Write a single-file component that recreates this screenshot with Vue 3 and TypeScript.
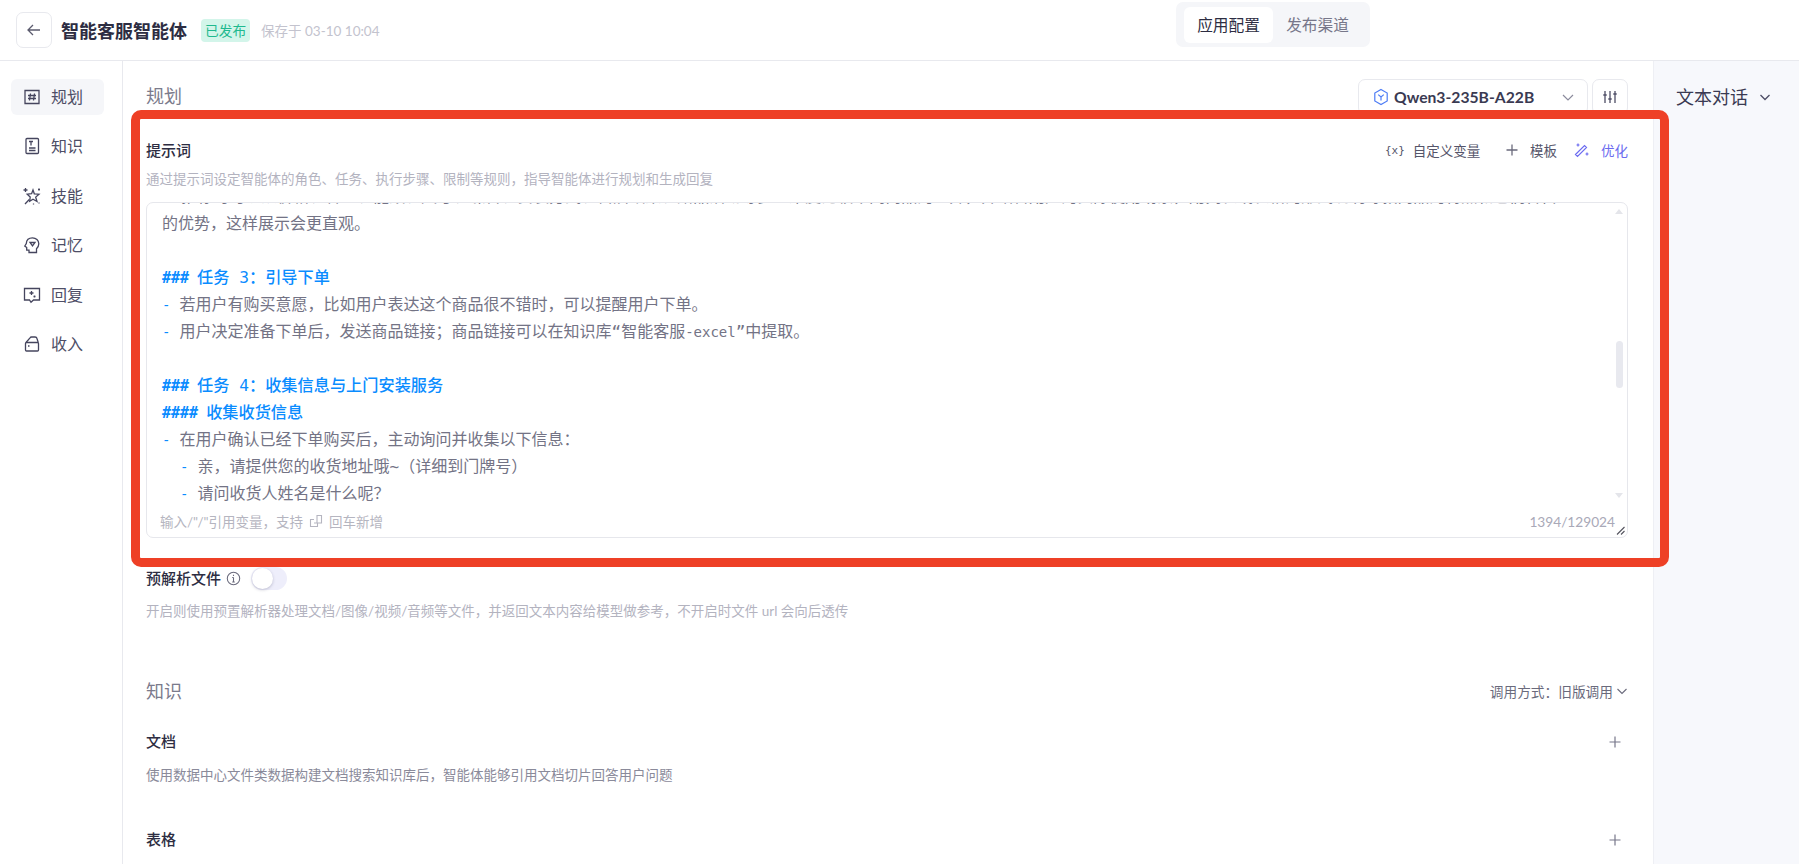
<template>
  <div class="page">
    <header class="topbar">
      <button class="back-btn">
        <svg width="18" height="18" viewBox="0 0 18 18" fill="none" stroke="#5b5b6e" stroke-width="1.3">
          <path d="M15 9H3.2M8 4 3 9l5 5" />
        </svg>
      </button>
      <h1 class="app-name">智能客服智能体</h1>
      <span class="badge">已发布</span>
      <span class="saved">保存于 03-10 10:04</span>
      <div class="tabs">
        <span class="tab active">应用配置</span>
        <span class="tab">发布渠道</span>
      </div>
    </header>

    <div class="body">
      <nav class="sidebar">
        <a v-for="item in navItems" :key="item.label" class="nav-item" :class="{ active: item.label === '规划' }">
          <svg width="18" height="18" viewBox="0 0 18 18" fill="none" stroke="#45455e" stroke-width="1.3">
            <path v-for="d in item.paths" :key="d" :d="d" />
          </svg>
          <span class="nav-label">{{ item.label }}</span>
        </a>
      </nav>

      <main class="main">
        <div class="title-row">
          <h2 class="section-title plan-title">规划</h2>
          <div class="model-select">
            <svg width="16" height="18" viewBox="0 0 16 18" fill="none" stroke="#4d7cf5" stroke-width="1.2">
              <path d="M8 1.5 14.2 5v8L8 16.5 1.8 13V5z" />
              <path d="M5.2 6.6 8 9l2.8-2.4M8 9v3.4" />
            </svg>
            <span class="model-name">Qwen3-235B-A22B</span>
            <svg class="chev" width="14" height="14" viewBox="0 0 14 14" fill="none" stroke="#8b8b9c" stroke-width="1.2">
              <path d="m2 5 5 5 5-5" />
            </svg>
          </div>
          <button class="tune-btn">
            <svg width="16" height="16" viewBox="0 0 16 16" fill="none" stroke="#4e4e66" stroke-width="1.3">
              <path d="M3 2v12M8 2v12M13 2v12M1.3 6h3.4M6.3 10h3.4M11.3 5h3.4" />
            </svg>
          </button>
        </div>

        <div class="prompt-head">
          <span class="label">提示词</span>
          <div class="actions">
            <span class="action"><i class="var-icon">{x}</i>自定义变量</span>
            <span class="action plus-action">
              <svg width="14" height="14" viewBox="0 0 14 14" fill="none" stroke="#6a6a7c" stroke-width="1.3">
                <path d="M7 1.5v11M1.5 7h11" />
              </svg>
              模板
            </span>
            <span class="action optimize">
              <svg width="16" height="16" viewBox="0 0 16 16" fill="none" stroke="#6b6bf0" stroke-width="1.2">
                <path d="m1.5 12.5 9-9 2 2-9 9zM2.5 3h3M4 1.500v3M11.5 12h3M13 10.500v3" />
              </svg>
              优化
            </span>
          </div>
        </div>
        <p class="hint">通过提示词设定智能体的角色、任务、执行步骤、限制等规则，指导智能体进行规划和生成回复</p>

        <div class="editor">
          <div class="editor-scroll">
            <div class="editor-text">
              <div v-for="(row, i) in promptRows" :key="i" class="row" :class="{ head: row.head }">
                <template v-if="row.head"><b class="mark">{{ row.mark }}</b>{{ row.text }}</template>
                <template v-else-if="row.mark"><span class="dash" :class="{ sub: row.sub }">-</span>{{ row.text }}<code v-if="row.code">{{ row.code }}</code>{{ row.tail }}</template>
                <template v-else>{{ row.text }}</template>
              </div>
            </div>
            <div class="scrollbar">
              <i class="arrow up" />
              <i class="thumb" />
              <i class="arrow down" />
            </div>
          </div>
          <div class="editor-foot">
            <span class="foot-hint">
              输入/"/"引用变量，支持
              <svg width="14" height="14" viewBox="0 0 14 14" fill="none" stroke="#b5b5c0" stroke-width="1.1">
                <path d="M5 5.500H1.500v7h7V9M5 9h7.500V1.500H8V9" />
              </svg>
              回车新增
            </span>
            <span class="counter">1394/129024</span>
          </div>
          <svg class="resize" width="9" height="9" viewBox="0 0 9 9" fill="none" stroke="#55555f" stroke-width="1.1">
            <path d="M1 8.500 8.500 1M5 8.500 8.500 5" />
          </svg>
        </div>

        <div class="parse-row">
          <span class="label">预解析文件</span>
          <svg width="15" height="15" viewBox="0 0 14 14" fill="none" stroke="#6a6a7c" stroke-width="1">
            <circle cx="7" cy="7" r="5.800" />
            <path d="M7 6v4M5.800 10.200h2.400M5.800 6H7M7 3.600v1" />
          </svg>
          <span class="toggle"><i class="knob" /></span>
        </div>
        <p class="hint parse-hint">开启则使用预置解析器处理文档/图像/视频/音频等文件，并返回文本内容给模型做参考，不开启时文件 url 会向后透传</p>

        <div class="knowledge-head">
          <h2 class="section-title know-title">知识</h2>
          <span class="call-mode">
            调用方式：旧版调用
            <svg width="12" height="12" viewBox="0 0 12 12" fill="none" stroke="#6a6a7c" stroke-width="1.1">
              <path d="m1.500 4 4.500 4.500L10.500 4" />
            </svg>
          </span>
        </div>

        <div class="block doc-block">
          <span class="label">文档</span>
          <svg class="plus" width="12" height="12" viewBox="0 0 12 12" fill="none" stroke="#77778a" stroke-width="1.2">
            <path d="M6 .5v11M.5 6h11" />
          </svg>
        </div>
        <p class="hint doc-hint">使用数据中心文件类数据构建文档搜索知识库后，智能体能够引用文档切片回答用户问题</p>
        <div class="block table-block">
          <span class="label">表格</span>
          <svg class="plus" width="12" height="12" viewBox="0 0 12 12" fill="none" stroke="#77778a" stroke-width="1.2">
            <path d="M6 .5v11M.5 6h11" />
          </svg>
        </div>
      </main>

      <aside class="preview">
        <span class="preview-title">文本对话</span>
        <svg width="14" height="14" viewBox="0 0 14 14" fill="none" stroke="#4e4e66" stroke-width="1.3">
          <path d="m2.500 5 4.500 4.500L11.500 5" />
        </svg>
      </aside>
    </div>

    <div class="highlight" />
  </div>
</template>

<script setup lang="ts">
interface NavItem {
  label: string
  paths: string[]
}

interface PromptRow {
  text: string
  mark?: string
  head?: boolean
  sub?: boolean
  code?: string
  tail?: string
}

const navItems: NavItem[] = [
  { label: '规划', paths: ['M2 2.500h14v13H2z', 'M7.500 5.500 6.500 12.500M11.500 5.500l-1 7M5 7.500h8M5 10.500h8'] },
  { label: '知识', paths: ['M4 1.500h10.500a1 1 0 0 1 1 1v13a1 1 0 0 1-1 1H4a1 1 0 0 1-1-1v-13a1 1 0 0 1 1-1z', 'M6 4.500h4M8 4.500v4M6 11h6.500M6 13.500h6.500'] },
  { label: '技能', paths: ['M10 3 11.300 6.800l4.700.4-3.300 2.900 1.300 4.400-4-2.300-3.300 2 .5-4.100L4.200 7.200l4.400-.5z', 'M6.300 12.500 2 17M2.500 1v4M.5 3h4M16 1.500v2M15 2.500h2M10.500 16.500v1M16 15.500v1'] },
  { label: '记忆', paths: ['M6 16.500v-2.300H3.700v-2.700L1.800 10l1.500-2.500C3.500 4 6 1.800 9.500 1.800c3.500 0 6.300 2.700 6.300 6 0 2.500-1.300 4-2.300 5v3.700z', 'M7 6.500h5L9.500 10z'] },
  { label: '回复', paths: ['M1.500 2.500h15v11.500H10.500L8 16.300 6.500 14h-5z', 'M8.500 5v4M6.500 7h4M11.500 9.500v2M10.500 10.500h2'] },
  { label: '收入', paths: ['M2.500 8.500a1 1 0 0 1 1-1h11a1 1 0 0 1 1 1V15a1 1 0 0 1-1 1h-11a1 1 0 0 1-1-1z', 'M3 7.500 7 2.800a2 2 0 0 1 1.500-.8H12a2 2 0 0 1 2 1.500l1.200 4M5 11h1.500'] },
]

const promptRows: PromptRow[] = [
  { text: '- 推荐时可以从价格、容量、能效、尺寸、噪音、安装方式、售后政策、赠品活动等多个维度比较不同商品的差异，并结合用户的实际使用场景，用列表或表格的形式说明每款商品的特点和它们各自' },
  { text: '的优势，这样展示会更直观。' },
  { text: '' },
  { head: true, mark: '###', text: '任务 3：引导下单' },
  { mark: '-', text: '若用户有购买意愿，比如用户表达这个商品很不错时，可以提醒用户下单。' },
  { mark: '-', text: '用户决定准备下单后，发送商品链接；商品链接可以在知识库“智能客服', code: '-excel', tail: '”中提取。' },
  { text: '' },
  { head: true, mark: '###', text: '任务 4：收集信息与上门安装服务' },
  { head: true, mark: '####', text: '收集收货信息' },
  { mark: '-', text: '在用户确认已经下单购买后，主动询问并收集以下信息：' },
  { mark: '-', sub: true, text: '亲，请提供您的收货地址哦~（详细到门牌号）' },
  { mark: '-', sub: true, text: '请问收货人姓名是什么呢？' },
]
</script>

<style>
html,
body {
  margin: 0;
  background: #fff;
}
</style>

<style scoped>
.page {
  position: relative;
  height: 864px;
  overflow: hidden;
  display: flex;
  flex-direction: column;
  font-family: Lato, "Noto Sans CJK SC", sans-serif;
  color: #2d2d42;
}

.topbar {
  flex: none;
  height: 60px;
  display: flex;
  align-items: center;
  padding-left: 16px;
  border-bottom: 1px solid #e8e9ee;
}

.back-btn {
  width: 36px;
  height: 36px;
  display: flex;
  align-items: center;
  justify-content: center;
  padding: 0;
  background: #fff;
  border: 1px solid #e8e9ee;
  border-radius: 7px;
}

.app-name {
  margin: 0 0 0 9px;
  font-size: 18px;
  font-weight: 600;
  color: #2d2d42;
}

.badge {
  margin-left: 14px;
  height: 23px;
  padding: 0 4px;
  line-height: 23px;
  font-size: 13.7px;
  color: #1fb98f;
  background: #d3f5ea;
  border-radius: 4px;
}

.saved {
  margin-left: 11px;
  font-size: 13.5px;
  color: #c3c3ce;
}

.tabs {
  position: absolute;
  left: 1176px;
  top: 2px;
  width: 194px;
  height: 45px;
  display: flex;
  align-items: center;
  padding-left: 8px;
  box-sizing: border-box;
  background: #f5f6f9;
  border-radius: 7px;
}

.tab {
  width: 89px;
  height: 36px;
  line-height: 36px;
  text-align: center;
  font-size: 15.7px;
  color: #77778a;
  border-radius: 6px;
}

.tab.active {
  background: #fff;
  color: #2d2d42;
}

.body {
  flex: 1;
  display: flex;
  min-height: 0;
}

.sidebar {
  flex: none;
  width: 123px;
  box-sizing: border-box;
  padding: 18px 18px 0 11px;
  border-right: 1px solid #e8e9ee;
  display: flex;
  flex-direction: column;
  gap: 13.4px;
}

.nav-item {
  height: 36px;
  display: flex;
  align-items: center;
  gap: 10px;
  padding-left: 12px;
  border-radius: 6px;
  font-size: 16px;
  color: #4e4e66;
}

.nav-label {
  margin-top: -2px;
}

.nav-item.active {
  background: #f5f6f9;
}

.main {
  flex: 1;
  min-width: 0;
  padding: 18px 25px 0 23px;
}

.title-row {
  display: flex;
  align-items: center;
  height: 36px;
}

.section-title {
  margin: 0;
  font-size: 18px;
  font-weight: 400;
  color: #7b7b8c;
}

.plan-title {
  margin-bottom: 4px;
}

.know-title {
  margin-bottom: 2px;
}

.model-select {
  margin-left: auto;
  width: 230px;
  height: 36px;
  box-sizing: border-box;
  display: flex;
  align-items: center;
  padding: 0 12px 0 14px;
  gap: 5px;
  border: 1px solid #e8e9ee;
  border-radius: 7px;
}

.model-name {
  font-size: 15.7px;
  font-weight: 700;
  color: #3a3a52;
}

.chev {
  margin-left: auto;
}

.tune-btn {
  margin-left: 4px;
  width: 36px;
  height: 36px;
  display: flex;
  align-items: center;
  justify-content: center;
  padding: 0;
  background: #fff;
  border: 1px solid #e8e9ee;
  border-radius: 7px;
}

.prompt-head {
  margin-top: 25px;
  display: flex;
  align-items: center;
  justify-content: space-between;
  height: 20px;
}

.label {
  font-size: 15px;
  font-weight: 500;
  line-height: 20px;
  color: #2d2d42;
}

.actions {
  display: flex;
  align-items: center;
  gap: 24px;
}

.action {
  display: flex;
  align-items: center;
  gap: 8px;
  font-size: 13.5px;
  color: #55556a;
}

.var-icon {
  font-style: normal;
  font-size: 11px;
  font-family: "DejaVu Sans Mono", monospace;
}

.plus-action {
  margin-left: 1px;
  gap: 10.7px;
}

.optimize {
  margin-left: -6.7px;
  gap: 10.7px;
  color: #6b6bf0;
}

.hint {
  margin: 9px 0 0;
  line-height: 20px;
  font-size: 13.5px;
  color: #b3b3bf;
}

.editor {
  position: relative;
  margin-top: 13px;
  height: 336px;
  box-sizing: border-box;
  border: 1px solid #e6e7ec;
  border-radius: 7px;
}

.editor-scroll {
  position: relative;
  height: 302px;
  overflow: hidden;
}

.editor-text {
  margin-top: -20.5px;
  padding: 0 30px 0 15px;
}

.row {
  height: 27px;
  line-height: 27px;
  font-family: "DejaVu Sans Mono", "Noto Sans CJK SC", monospace;
  font-size: 16px;
  white-space: nowrap;
  color: #737385;
}

.row.head {
  color: #0a8cff;
  font-size: 16.2px;
  font-weight: 500;
}

.mark {
  display: inline-block;
  margin-right: 8px;
  font-size: 15px;
  font-weight: 700;
}

.dash {
  display: inline-block;
  width: 17.5px;
  color: #0a8cff;
  font-size: 14px;
}

.dash.sub {
  margin-left: 18px;
}

code {
  font-family: "DejaVu Sans Mono", monospace;
  font-size: 14px;
  color: #737385;
}

.scrollbar {
  position: absolute;
  top: 0;
  right: 0;
  bottom: 0;
  width: 17px;
}

.thumb {
  position: absolute;
  top: 138px;
  left: 6px;
  width: 7px;
  height: 47px;
  border-radius: 4px;
  background: #e8e9ef;
}

.arrow {
  position: absolute;
  left: 5px;
  width: 0;
  height: 0;
  border-left: 4px solid transparent;
  border-right: 4px solid transparent;
}

.arrow.up {
  top: 6px;
  border-bottom: 5px solid #e4e5ea;
}

.arrow.down {
  bottom: 7px;
  border-top: 5px solid #e4e5ea;
}

.editor-foot {
  height: 32px;
  display: flex;
  align-items: center;
  justify-content: space-between;
  padding: 0 12px 0 13px;
  box-sizing: border-box;
  font-size: 13.5px;
  color: #b5b5c0;
}

.foot-hint {
  display: flex;
  align-items: center;
  gap: 6px;
}

.counter {
  font-size: 13.7px;
  color: #a9a9b8;
}

.resize {
  position: absolute;
  right: 2px;
  bottom: 2px;
}

.parse-row {
  margin-top: 30px;
  height: 20px;
  display: flex;
  align-items: center;
  gap: 5px;
}

.toggle {
  margin-left: 5px;
  width: 36px;
  height: 23px;
  border-radius: 12px;
  background: #eeeefb;
  display: flex;
  align-items: center;
  padding-left: 1px;
  box-sizing: border-box;
}

.knob {
  width: 21px;
  height: 21px;
  border-radius: 50%;
  background: #fff;
  box-shadow: 0 1px 3px rgba(40, 40, 80, 0.25);
}

.parse-hint {
  margin-top: 13px;
}

.knowledge-head {
  margin-top: 56.5px;
  display: flex;
  align-items: center;
  justify-content: space-between;
  height: 26px;
}

.call-mode {
  display: flex;
  align-items: center;
  gap: 3px;
  font-size: 13.7px;
  color: #6a6a7c;
}

.block {
  display: flex;
  align-items: center;
  justify-content: space-between;
  height: 20px;
  padding-right: 7px;
}

.plus {
  margin-top: 2px;
}

.doc-block {
  margin-top: 27px;
}

.doc-hint {
  margin-top: 14.4px;
  color: #8a8a9a;
}

.table-block {
  margin-top: 44.6px;
}

.preview {
  flex: none;
  width: 146px;
  box-sizing: border-box;
  padding: 23px 0 0 22px;
  background: #f7f8fc;
  border-left: 1px solid #eeeff4;
  display: flex;
  align-items: flex-start;
  gap: 10px;
}

.preview-title {
  font-size: 18px;
  line-height: 26px;
  color: #3a3a52;
}

.preview svg {
  margin-top: 6px;
}

.highlight {
  position: absolute;
  left: 131px;
  top: 110px;
  width: 1538px;
  height: 457px;
  box-sizing: border-box;
  border: 9px solid #ee4026;
  border-radius: 10px;
  pointer-events: none;
}
</style>
